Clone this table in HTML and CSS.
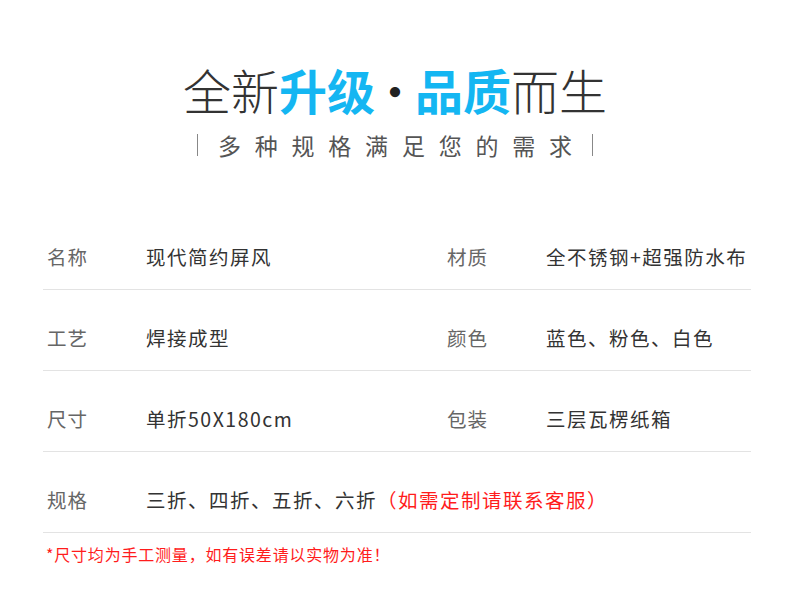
FILE: index.html
```html
<!DOCTYPE html>
<html lang="zh-CN">
<head>
    <meta charset="UTF-8">
    <meta name="viewport" content="width=device-width, initial-scale=1.0">
    <title>产品参数</title>
    <link rel="stylesheet" href="styles.css">
</head>
<body>
    <div class="header">
        <h1 class="title">全新<span class="hl">升级</span><span class="dot">·</span><span class="hl">品质</span>而生</h1>
        <p class="subtitle"><span class="bar"></span><span class="sub-text">多种规格满足您的需求</span><span class="bar"></span></p>
    </div>

    <div class="specs">
        <div class="row">
            <span class="label">名称</span>
            <span class="value">现代简约屏风</span>
            <span class="label">材质</span>
            <span class="value last">全不锈钢+超强防水布</span>
        </div>
        <div class="row">
            <span class="label">工艺</span>
            <span class="value">焊接成型</span>
            <span class="label">颜色</span>
            <span class="value last">蓝色、粉色、白色</span>
        </div>
        <div class="row">
            <span class="label">尺寸</span>
            <span class="value">单折50X180cm</span>
            <span class="label">包装</span>
            <span class="value last">三层瓦楞纸箱</span>
        </div>
        <div class="row">
            <span class="label">规格</span>
            <span class="value last">三折、四折、五折、六折<span class="red">（如需定制请联系客服）</span></span>
        </div>
    </div>

    <p class="note">*尺寸均为手工测量，如有误差请以实物为准！</p>
</body>
</html>
```

FILE: styles.css
```css
body {
    margin: 0;
    background: #fff;
    font-family: "Noto Sans CJK SC", "Noto Sans", sans-serif;
    color: #333;
}
.header {
    padding-top: 61px;
    text-align: center;
}
.title {
    margin: 0;
    font-size: 48px;
    line-height: 56px;
    font-weight: 300;
    color: #333;
}
.title .hl {
    color: #14b6f2;
    font-weight: 700;
}
.title .dot {
    font-weight: 400;
    color: #222;
    margin: 0 -4px;
}
.subtitle {
    margin: 13px 0 0;
    height: 30px;
    display: flex;
    justify-content: center;
    align-items: center;
    color: #555;
}
.sub-text {
    font-size: 23px;
    line-height: 30px;
    letter-spacing: 13.8px;
    margin-right: -13.8px;
}
.bar {
    display: inline-block;
    width: 0;
    height: 22px;
    border-left: 1px solid #888;
    margin: 0 20px;
}
.specs {
    margin: 47px 39px 0 43px;
}
.row {
    display: flex;
    padding: 38px 0 22px 4px;
    border-bottom: 1px solid #e3e3e3;
    font-size: 19.5px;
    line-height: 20px;
}
.row:first-child {
    padding-top: 40px;
}
.label {
    flex: none;
    width: 99px;
    color: #666;
    letter-spacing: 1px;
}
.value {
    flex: none;
    width: 301px;
    color: #333;
    letter-spacing: 1.5px;
}
.value.last {
    flex: 1;
    width: auto;
    white-space: nowrap;
}
.red {
    color: #ff1c1c;
}
.note {
    margin: 11px 0 0 46px;
    font-size: 16px;
    line-height: 20px;
    letter-spacing: 0.8px;
    color: #ff1c1c;
}
```
